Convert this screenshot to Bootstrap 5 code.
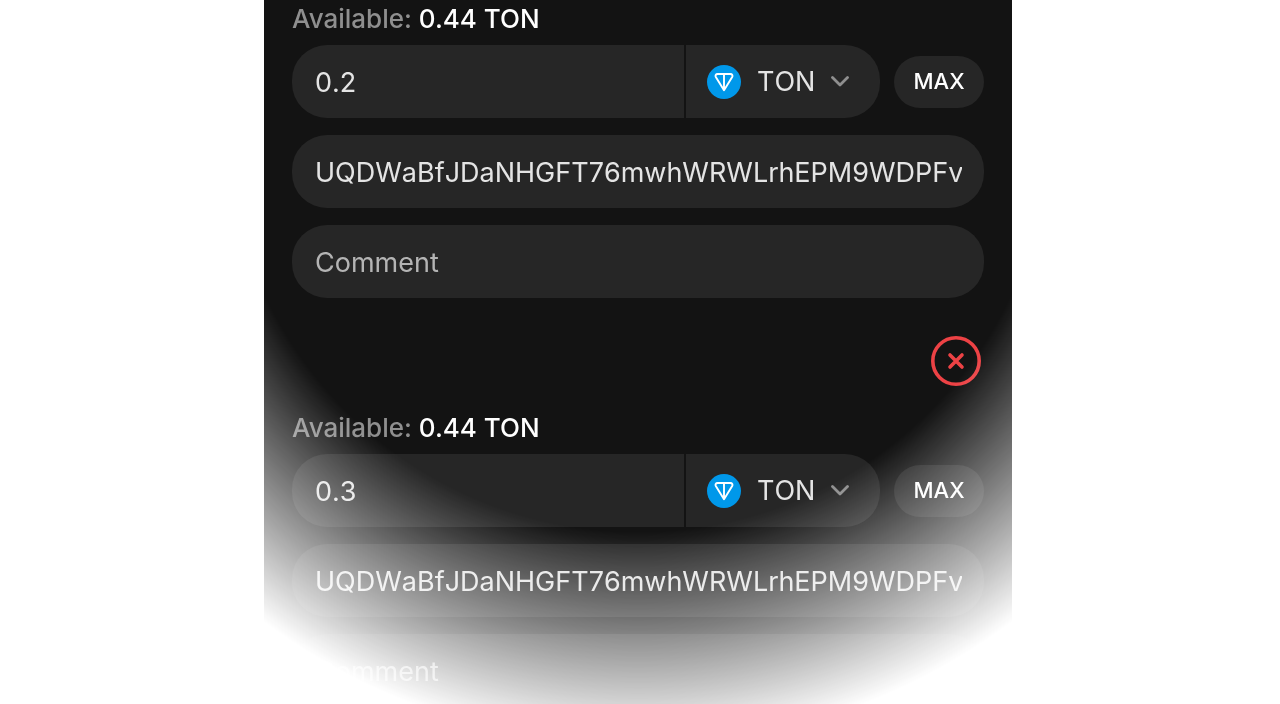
<!DOCTYPE html>
<html lang="en">
<head>
<meta charset="utf-8">
<meta name="viewport" content="width=device-width, initial-scale=1">
<title>Send TON</title>
<link href="https://cdn.jsdelivr.net/npm/bootstrap@5.3.0/dist/css/bootstrap.min.css" rel="stylesheet">
<style>
  body { font-family: Inter, "Liberation Sans", sans-serif; background: #fff; padding-right: 4px; }
  .send-panel {
    max-width: 748px; padding: 4px 28px 0; background: #131313; color: #fff;
    -webkit-mask-image: radial-gradient(circle at 50% 120px, #000 412px, transparent 626px);
    mask-image: radial-gradient(circle at 50% 120px, #000 412px, transparent 626px);
  }
  .balance { font-size: 26px; line-height: 30px; margin-bottom: 11px; font-weight: 500; }
  .balance-label { color: #8f8f8f; }
  .stack { gap: 17px; }
  .amount-row { gap: 14px; }
  .amount-group { gap: 2px; }
  .field, .field:focus {
    height: 73px; padding: 2px 22px 0 23px; border: 0; border-radius: 35px;
    background: #262626; color: #e4e4e4; font-size: 27px; font-kerning: none; box-shadow: none;
  }
  .field::placeholder { color: #b4b4b4; opacity: 1; }
  .amount-group .field-start { border-radius: 35px 0 0 35px; }
  .token-box { width: 194px; }
  .token-box .field { border-radius: 0 35px 35px 0; padding: 2px 22px 0 71px; appearance: none; -webkit-appearance: none; width: 100%; }
  .token-icon { left: 21px; }
  .token-arrow { right: 31px; }
  .btn-max, .btn-max:hover {
    width: 90px; height: 52px; padding: 0; border: 0; border-radius: 26px;
    background: #262626; color: #fff; font-size: 22px; font-weight: 500;
  }
  .remove-row { padding: 38px 3px 27px; }
  .btn-remove { width: 50px; height: 50px; padding: 0; border: 0; line-height: 0; }
</style>
</head>
<body>
<main class="send-panel vh-100 overflow-hidden mx-auto">

  <section>
    <div class="balance"><span class="balance-label">Available:</span> 0.44 TON</div>
    <div class="stack d-flex flex-column">
      <div class="amount-row d-flex align-items-center">
        <div class="amount-group d-flex flex-grow-1">
          <input class="field field-start form-control" type="text" value="0.2" aria-label="Amount">
          <div class="token-box position-relative d-flex align-items-center flex-shrink-0">
            <select class="field" aria-label="Token"><option>TON</option></select>
            <svg class="token-icon position-absolute pe-none" width="34" height="34" viewBox="0 0 34 34" fill="none" aria-hidden="true">
              <circle cx="17" cy="17" r="17" fill="#0098ea"/>
              <path d="M10.600 9h12.800c1.800 0 2.600 1.600 1.800 3L17 25.200 8.800 12c-.8-1.400 0-3 1.800-3zM17 9v15.500" stroke="#fff" stroke-width="1.900" stroke-linejoin="round"/>
            </svg>
            <svg class="token-arrow position-absolute pe-none" width="18" height="11" viewBox="0 0 18 11" fill="none" aria-hidden="true">
              <path d="M1.500 1.500L9 9l7.500-7.500" stroke="#8f8f8f" stroke-width="2.800" stroke-linecap="round" stroke-linejoin="round"/>
            </svg>
          </div>
        </div>
        <button class="btn btn-max flex-shrink-0" type="button">MAX</button>
      </div>
      <input class="field form-control" type="text" value="UQDWaBfJDaNHGFT76mwhWRWLrhEPM9WDPFv" aria-label="Recipient address">
      <input class="field form-control" type="text" placeholder="Comment" aria-label="Comment">
    </div>
  </section>

  <section>
    <div class="remove-row d-flex justify-content-end">
      <button class="btn btn-remove" type="button" aria-label="Remove recipient">
        <svg width="50" height="50" viewBox="0 0 50 50" fill="none" stroke="#ed4245" aria-hidden="true">
          <circle cx="25" cy="25" r="23.200" stroke-width="3.600"/>
          <path d="M19 19l12 12M31 19L19 31" stroke-width="3.600" stroke-linecap="round"/>
        </svg>
      </button>
    </div>
    <div class="balance"><span class="balance-label">Available:</span> 0.44 TON</div>
    <div class="stack d-flex flex-column">
      <div class="amount-row d-flex align-items-center">
        <div class="amount-group d-flex flex-grow-1">
          <input class="field field-start form-control" type="text" value="0.3" aria-label="Amount">
          <div class="token-box position-relative d-flex align-items-center flex-shrink-0">
            <select class="field" aria-label="Token"><option>TON</option></select>
            <svg class="token-icon position-absolute pe-none" width="34" height="34" viewBox="0 0 34 34" fill="none" aria-hidden="true">
              <circle cx="17" cy="17" r="17" fill="#0098ea"/>
              <path d="M10.600 9h12.800c1.800 0 2.600 1.600 1.800 3L17 25.200 8.800 12c-.8-1.400 0-3 1.800-3zM17 9v15.500" stroke="#fff" stroke-width="1.900" stroke-linejoin="round"/>
            </svg>
            <svg class="token-arrow position-absolute pe-none" width="18" height="11" viewBox="0 0 18 11" fill="none" aria-hidden="true">
              <path d="M1.500 1.500L9 9l7.500-7.500" stroke="#8f8f8f" stroke-width="2.800" stroke-linecap="round" stroke-linejoin="round"/>
            </svg>
          </div>
        </div>
        <button class="btn btn-max flex-shrink-0" type="button">MAX</button>
      </div>
      <input class="field form-control" type="text" value="UQDWaBfJDaNHGFT76mwhWRWLrhEPM9WDPFv" aria-label="Recipient address">
      <input class="field form-control" type="text" placeholder="Comment" aria-label="Comment">
    </div>
  </section>

</main>
<script src="https://cdn.jsdelivr.net/npm/bootstrap@5.3.0/dist/js/bootstrap.bundle.min.js"></script>
</body>
</html>
